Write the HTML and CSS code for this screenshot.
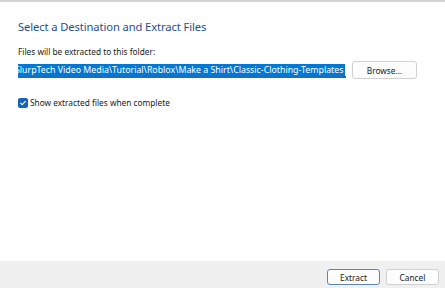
FILE: index.html
```html
<!DOCTYPE html>
<html lang="en">
<head>
<meta charset="UTF-8">
<meta name="viewport" content="width=device-width, initial-scale=1.0">
<title>Extract Compressed Folders</title>
<link rel="stylesheet" href="styles.css">
</head>
<body>

<div class="dialog">
    <div class="content">
        <h2 class="title">Select a Destination and Extract Files</h2>

        <label class="field-label" for="destination">Files will be extracted to this folder:</label>
        <div class="path-row">
            <div class="path-input" id="destination">
                <span class="path-text">SlurpTech Video Media\Tutorial\Roblox\Make a Shirt\Classic-Clothing-Templates</span>
            </div>
            <button type="button" class="btn">Browse...</button>
        </div>

        <label class="check-row">
            <span class="checkbox">
                <svg width="10" height="10" viewBox="0 0 10 10">
                    <path d="M2.6 5.2 L4.2 6.7 L7.4 3.4" fill="none" stroke="#fff" stroke-width="1.1" stroke-linecap="round" stroke-linejoin="round"/>
                </svg>
            </span>
            Show extracted files when complete
        </label>
    </div>

    <div class="footer">
        <button type="button" class="btn btn-default">Extract</button>
        <button type="button" class="btn">Cancel</button>
    </div>
</div>

</body>
</html>
```

FILE: styles.css
```css
body {
    margin: 0;
    padding: 0;
    background-color: #fff;
    font-family: "Noto Sans", "Open Sans", sans-serif;
    color: #1a1a1a;
}

.dialog {
    width: 445px;
    height: 288px;
    display: flex;
    flex-direction: column;
    border-top: 2px solid #d4d4d4;
    box-sizing: border-box;
    overflow: hidden;
}

.content {
    flex: 1;
    padding: 17px 18px 0 18px;
}

.title {
    margin: 0 0 12px 0;
    font-size: 11.2px;
    line-height: 15px;
    font-weight: normal;
    color: #1f4e8f;
    letter-spacing: -0.1px;
}

.field-label {
    display: block;
    font-size: 8.3px;
    line-height: 12px;
    margin-bottom: 3px;
}

.path-row {
    display: flex;
    align-items: center;
    gap: 6px;
}

.path-input {
    width: 328px;
    height: 15px;
    padding: 1px 0 0 1px;
    box-sizing: border-box;
    border-bottom: 2px solid #1a6ec2;
    overflow: hidden;
    white-space: nowrap;
    display: flex;
    align-items: flex-start;
}

.path-text {
    display: block;
    flex-shrink: 0;
    margin-left: -4px;
    background-color: #0078d7;
    color: #fff;
    font-size: 8.8px;
    line-height: 12px;
    padding-right: 2px;
}

.btn {
    font-family: inherit;
    font-size: 8.3px;
    color: #1a1a1a;
    background-color: #fdfdfd;
    border: 1px solid #d0d0d0;
    border-radius: 3px;
    width: 65px;
    height: 18px;
    padding: 0;
}

.check-row {
    display: flex;
    align-items: center;
    gap: 2px;
    margin-top: 18px;
    font-size: 8.3px;
}

.checkbox {
    width: 10px;
    height: 10px;
    border-radius: 2px;
    background-color: #1565b7;
    display: flex;
}

.footer {
    height: 27px;
    background-color: #f0f0f0;
    display: flex;
    justify-content: flex-end;
    align-items: flex-start;
    gap: 6px;
    padding: 8px 6px 0 0;
    box-sizing: border-box;
}

.footer .btn {
    width: 53px;
    height: 16px;
}

.btn-default {
    border-color: #5b87ad;
}
```
